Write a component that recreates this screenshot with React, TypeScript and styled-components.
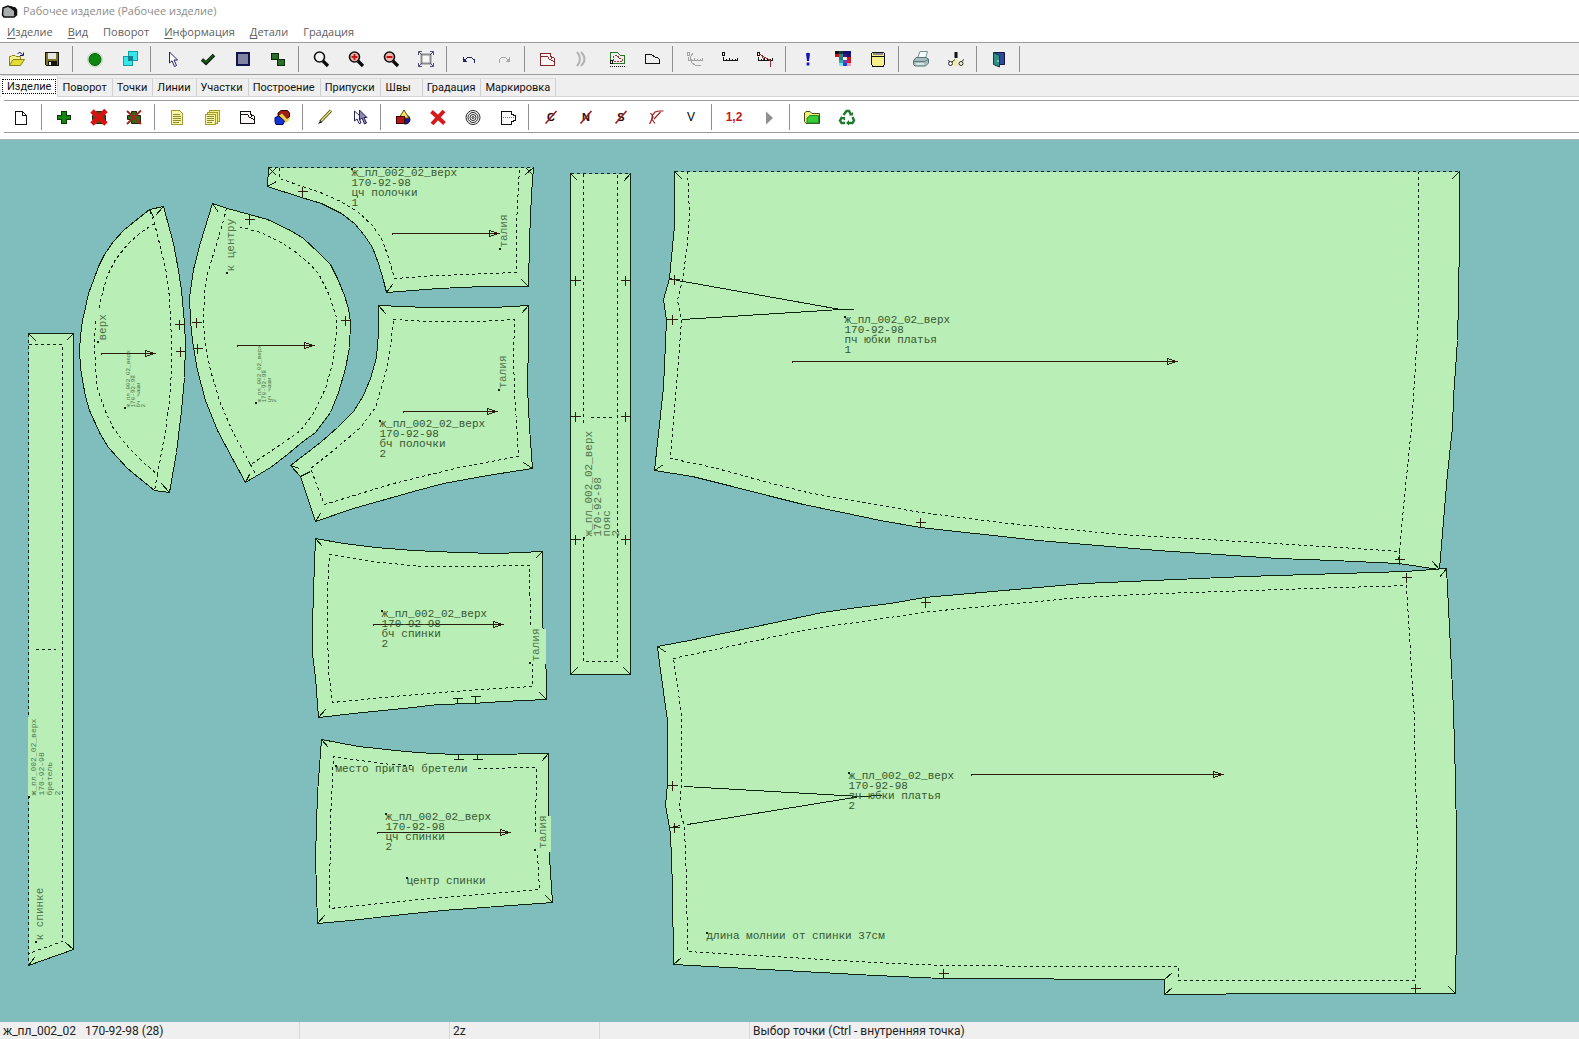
import React from 'react';
import styled, { createGlobalStyle, css } from 'styled-components';

const GlobalStyle = createGlobalStyle`
  * { box-sizing: border-box; }
  html, body, #root { height: 100%; }
  body { margin: 0; background: #fff; overflow: hidden; }
  button { font: inherit; color: inherit; background: none; border: 0; padding: 0; margin: 0; }
`;

const UI_FONT = 'Roboto, "Open Sans", sans-serif';
const MENU_FONT = '"Open Sans", "Noto Sans", sans-serif';
const GLYPH_FONT = '"Liberation Sans", Roboto, sans-serif';
const PLOT_FONT = '"Liberation Mono", "DejaVu Sans Mono", monospace';

const Window = styled.div`
  display: flex;
  flex-direction: column;
  height: 100vh;
  font-family: ${UI_FONT};
  font-size: 12px;
`;

const TitleBar = styled.header`
  display: flex;
  align-items: center;
  gap: 4px;
  height: 22px;
  padding-left: 1px;
  color: #8c8c8c;
`;

const Title = styled.h1`
  margin: 0;
  font-family: ${MENU_FONT};
  font-size: 11px;
  font-weight: 400;
  line-height: 20px;
`;

const MenuBar = styled.nav`
  display: flex;
  align-items: center;
  gap: 15px;
  height: 20px;
  padding-left: 7px;
  font-family: ${MENU_FONT};
  font-size: 11px;
  color: #606060;
`;

const MenuItem = styled.button`
  line-height: 20px;
  text-underline-offset: 2px;
`;

const Toolbar = styled.div<{ $page?: boolean }>`
  display: flex;
  align-items: center;
  height: 33px;
  flex: none;
  border-top: 1px solid #9a9a9a;
  border-bottom: 1px solid #9a9a9a;
  background: #efefef;
  ${(p) =>
    p.$page &&
    css`
      margin: 3px 0 6px 4px;
      background: #fff;
    `}
`;

const ToolButton = styled.button`
  display: flex;
  align-items: center;
  justify-content: center;
  width: 35px;
  height: 30px;
  padding-right: 1px;
  flex: none;
`;

const Separator = styled.span`
  width: 8px;
  height: 26px;
  flex: none;
  &::before {
    content: '';
    display: block;
    width: 1px;
    height: 100%;
    margin-left: 2px;
    background: #8f8f8f;
  }
`;

const Glyph = styled.span<{ $color?: string; $bold?: boolean }>`
  font-family: ${GLYPH_FONT};
  font-size: 12px;
  line-height: 16px;
  font-weight: ${(p) => (p.$bold ? 700 : 400)};
  color: ${(p) => p.$color ?? '#000'};
`;

const TabStrip = styled.div`
  display: flex;
  align-items: flex-end;
  height: 22px;
  flex: none;
  padding-left: 1px;
  background: #efefef;
  border-bottom: 1px solid #d5d5d5;
`;

const Tab = styled.button<{ $active?: boolean; $wide?: boolean }>`
  height: 18px;
  padding: ${(p) => (p.$wide ? '0 11px 0 5px' : '0 5px 0 4px')};
  border-top: 1px solid #dcdcdc;
  border-right: 1px solid #d0d0d0;
  font-size: 11px;
  line-height: 18px;
  color: #111;
  ${(p) =>
    p.$active &&
    css`
      height: 22px;
      margin-bottom: -1px;
      padding: 2px 1px 3px;
      border-right: 1px solid #dcdcdc;
      background: #fff;
    `}
`;

const FocusRect = styled.span`
  display: block;
  padding: 0 4px;
  height: 15px;
  line-height: 13px;
  border: 1px dotted #000;
`;

const Workspace = styled.main`
  flex: 1;
  min-height: 0;
  overflow: hidden;
  background: #80bdbd;
  border-top: 1px solid #a6b4b2;
`;

const Plot = styled.svg`
  display: block;
  width: 100%;
  height: 100%;
  shape-rendering: crispEdges;
  font-family: ${PLOT_FONT};
`;

const StatusBar = styled.footer`
  display: flex;
  height: 17px;
  flex: none;
  background: #efefef;
  color: #222;
  line-height: 18px;
  white-space: pre;
`;

const StatusCell = styled.span<{ $grow?: boolean; $double?: boolean }>`
  flex: ${(p) => (p.$grow ? '1 1 0' : p.$double ? '0 0 300px' : '0 0 150px')};
  padding-left: 3px;
  overflow: hidden;
  border-right: ${(p) => (p.$grow ? '0' : '1px solid #d7d7d7')};
`;

/* ---------- toolbar icons, 18 x 18 grid ---------- */

const IconSvg = styled.svg`
  display: block;
  width: 18px;
  height: 18px;
  fill: none;
  overflow: visible;
`;

const Icon = ({ children, soft }: { children: React.ReactNode; soft?: boolean }) => (
  <IconSvg viewBox="0 0 18 18" shapeRendering={soft ? 'auto' : 'crispEdges'} aria-hidden="true">
    {children}
  </IconSvg>
);

const folder = (
  <Icon soft>
    <path d="M1.500 15.500V6.500H3L4 5.500H7L8 6.500H12.500V9" fill="#f4f08a" stroke="#8a8420" />
    <path d="M1.500 15.500L5 9.500H16.500L12.500 15.500Z" fill="#e4dc30" stroke="#8a8420" />
    <path d="M9.500 4Q12 .500 14.500 5M15.500 2.500V5.500H12" stroke="#1c1c6c" />
  </Icon>
);
const save = (
  <Icon>
    <path d="M2.500 2.500H15.500V15.500H3.500L2.500 14.500Z" fill="#77742c" stroke="#111" />
    <rect x="5" y="3" width="8" height="6" fill="#e6e6e2" />
    <rect x="5" y="11" width="9" height="4" fill="#15150c" />
    <rect x="6" y="12" width="2" height="3" fill="#e6e6e2" />
  </Icon>
);
const greenDot = (
  <Icon soft>
    <circle cx="9" cy="9.500" r="7.500" stroke="#b6dcb6" />
    <circle cx="9" cy="9.500" r="6" fill="#0d860d" stroke="#065606" />
  </Icon>
);
const cyanSquares = (
  <Icon>
    <rect x="7.500" y="1.500" width="9" height="9" fill="#35e6ea" stroke="#12a0a6" />
    <rect x="2.500" y="6.500" width="9" height="9" fill="#35e6ea" stroke="#12a0a6" />
    <rect x="7" y="6" width="5" height="5" fill="#167f90" />
  </Icon>
);
const pointer = (
  <Icon soft>
    <path d="M5.500 2V13L8 10.800L10.500 16.500L12.500 15.500L10 10H13.500Z" fill="#fff" stroke="#22225e" />
  </Icon>
);
const tick = (
  <Icon soft>
    <path d="M3 9.500L7 13L15 5" stroke="#111" strokeWidth="3.500" />
    <path d="M3.500 9.800L7 12.500L14.500 5.300" stroke="#145c14" strokeWidth="1.800" />
  </Icon>
);
const greySquare = (
  <Icon>
    <rect x="3" y="3" width="12" height="12" fill="#83839f" stroke="#12124e" strokeWidth="2" />
  </Icon>
);
const twoBlocks = (
  <Icon>
    <rect x="2.500" y="3.500" width="7" height="6" fill="#2b6e2b" stroke="#082c08" />
    <rect x="8.500" y="9.500" width="7" height="6" fill="#2b6e2b" stroke="#082c08" />
  </Icon>
);
const lens = (sign?: 'plus' | 'minus') => (
  <Icon soft>
    <path d="M11 11L16 16" stroke="#0a0a0a" strokeWidth="3.200" />
    <circle cx="7.500" cy="7" r="5" fill={sign ? '#f5b9b4' : '#f4f4f4'} stroke="#111" strokeWidth="1.600" />
    {sign && <path d={sign === 'plus' ? 'M4.500 7H10.500M7.500 4V10' : 'M4.500 7H10.500'} stroke="#c41616" strokeWidth="2" />}
  </Icon>
);
const fit = (
  <Icon soft>
    <rect x="4.500" y="4.500" width="9" height="9" fill="#f7f7f7" stroke="#8d8d8d" strokeWidth="2" />
    <path d="M1.500 5V1.500H5M2 2L5 5M13 1.500H16.500V5M16 2L13 5M16.500 13V16.500H13M16 16L13 13M5 16.500H1.500V13M2 16L5 13" stroke="#4a4a72" />
  </Icon>
);
const undo = (color: string, flip?: boolean) => (
  <Icon>
    <g transform={flip ? 'matrix(-1 0 0 1 18 0)' : undefined}>
      <path d="M5 9.500L8 7.500H11L14 9.500V12.500M3.500 7V11.500H7" stroke={color} />
      <path d="M4 9.500L5.500 11" stroke={color} />
    </g>
  </Icon>
);
const sheet = (color: string) => (
  <Icon>
    <path d="M2.500 3.500H11.500L13.500 6.500L16.500 8.500V15.500H2.500Z" stroke={color} fill="#fbf7f7" />
    <path d="M2.500 6.500H9.500L11.500 9.500L16 11.500M12 3.500L13.500 9" stroke={color} />
  </Icon>
);
const arcs = (
  <Icon soft>
    <path d="M4 2Q10 9 4 16M8 2Q15 9 8 16" stroke="#b3b3b3" strokeWidth="2" />
  </Icon>
);
const greenPattern = (
  <Icon>
    <path d="M2.500 13.500V2.500H9.500L12.500 5.500H16.500V13.500Z" stroke="#277427" />
    <path d="M5.500 10.500V5.500H9L12 8.500H14V11.500H5" stroke="#a23636" strokeDasharray="2 1" />
    <path d="M2 16.500H17" stroke="#111" strokeDasharray="1 1" />
    <rect x="2.500" y="10.500" width="2" height="3" stroke="#111" />
  </Icon>
);
const flatPattern = (
  <Icon>
    <path d="M2.500 4.500H8.500L12.500 7.500H14.500L16.500 9.500V13.500H2.500Z" stroke="#111" />
  </Icon>
);
const ruler = (kind: 'grey' | 'plain' | 'red') => {
  const color = kind === 'grey' ? '#a2a2a2' : '#111';
  return (
    <Icon>
      <path d="M2.500 7V10.500H16.500V8M5.500 9V10M8.500 8V10M11.500 9V10M14.500 9V10" stroke={color} />
      <rect x="1.500" y="2.500" width="2" height="3" stroke={color} />
      {kind === 'grey' && <path d="M7 3L4 8L6 13L10 15.500H15" stroke={color} />}
      {kind === 'red' && <path d="M3 4L14.500 10.500V16.500M6 6.500L8 10" stroke="#9b2c2c" />}
    </Icon>
  );
};
const exclaim = (
  <Icon soft>
    <path d="M7 3.500Q9 2 11 3.500L10 11H8Z" fill="#1414b4" />
    <rect x="7.600" y="12.500" width="2.800" height="3" fill="#1414b4" />
  </Icon>
);
const mosaicColors = [
  ['#111', '#123c3c', '#14126e', '#111177'],
  ['#c01616', '#2a8686', '#3a1478', '#1a1a66'],
  ['#efefef', '#227e7a', '#efefef', '#c01a2a'],
  ['#efefef', '#28aab0', '#7a3cb4', '#d41e2e'],
  ['#efefef', '#7ce8ea', '#2740da', '#e9a0b8'],
];
const mosaic = (
  <Icon>
    {mosaicColors.map((row, y) =>
      row.map((c, x) => <rect key={`${x}-${y}`} x={1 + x * 4} y={1 + y * 3} width="4" height="3" fill={c} />),
    )}
  </Icon>
);
const database = (
  <Icon>
    <path d="M3.500 2.500H14.500L15.500 4V14L14.500 16.500H3.500L2.500 14V4Z" fill="#f5f08c" stroke="#111" />
    <rect x="4" y="2" width="10" height="3" fill="#8c8c8c" />
    <path d="M2.500 6.500H15.500M3.500 2.500H14.500" stroke="#111" />
  </Icon>
);
const printer = (
  <Icon soft>
    <path d="M5.500 8L8 1.500H15.500L13.500 8" fill="#f8fbfb" stroke="#6f9193" />
    <path d="M1.500 11L4 7.500H14L16.500 9V13L13.500 16H3L1.500 14.500Z" fill="#a8bcbe" stroke="#55777b" />
    <path d="M2 11.500H13L16 9.500" stroke="#587c80" />
    <path d="M4 14H12" stroke="#e9f4f4" strokeWidth="1.500" />
  </Icon>
);
const cutter = (
  <Icon soft>
    <path d="M9 9V16" stroke="#f1eb9a" strokeWidth="3" />
    <rect x="7.500" y="2" width="3" height="6" fill="#111" />
    <circle cx="3.500" cy="13.500" r="2" stroke="#33331a" />
    <circle cx="14" cy="13.500" r="2" stroke="#33331a" />
    <path d="M5 12L8 9.500M14.500 11.500L17 9.500M1 10.500L3 11.500" stroke="#33331a" />
  </Icon>
);
const door = (
  <Icon soft>
    <path d="M3.500 2.500H14.500V14.500H10" fill="#2d4a94" stroke="#15154a" />
    <path d="M3.500 2.500L9.500 5.500V17L3.500 14.500Z" fill="#2f8e86" stroke="#123850" />
    <path d="M8 10V12" stroke="#d8f0e0" />
  </Icon>
);

const page = (
  <Icon>
    <path d="M3.500 3.500H10.500L14.500 7.500V16.500H3.500ZM10.500 3.500V7.500H14.500" fill="#fff" stroke="#111" />
  </Icon>
);
const plus = (
  <Icon>
    <path d="M6.500 3.500H11.500V7.500H15.500V11.500H11.500V15.500H6.500V11.500H2.500V7.500H6.500Z" fill="#148414" stroke="#063c06" />
  </Icon>
);
const plusCrossed = (fill: string, bold?: boolean) => (
  <Icon soft>
    <path d="M6.500 3.500H11.500V7.500H15.500V15.500H6.500V11.500H2.500V7.500H6.500Z" fill={fill} stroke="#2a2208" />
    <path d="M2 3L16 16M16 2.500L2 16" stroke={bold ? '#d41414' : '#a02a1c'} strokeWidth={bold ? 5 : 2} />
  </Icon>
);
const note = (double?: boolean) => (
  <Icon>
    {double && <path d="M6.500 4.500V2.500H16.500V13.500H14" fill="#f4f086" stroke="#a39d2e" />}
    {double && <path d="M4.500 6.500V4.500H14.500V15H12" fill="#f4f086" stroke="#a39d2e" />}
    <path d={double ? 'M2.500 6.500H12.500V16.500H2.500Z' : 'M3.500 2.500H11.500L14.500 5.500V16.500H3.500Z'} fill="#f8f5a8" stroke="#a39d2e" />
    <path d={double ? 'M4 8.500H11M4 10.500H11M4 12.500H11M4 14.500H9' : 'M5 6.500H12M5 8.500H13M5 10.500H13M5 12.500H13M5 14.500H11'} stroke="#8e8a34" />
  </Icon>
);
const cubes = (
  <Icon soft>
    <path d="M5 5L8 2.500H14.500L16.500 5V9L13 11L9 6L5 8Z" fill="#9f1f14" stroke="#300" />
    <path d="M5.500 8L9 5.500L14 11L16.500 9.500V12L12.500 15L8 9.500L5 11Z" fill="#f3d24a" />
    <path d="M2 9.500L6 8L11.500 13L10 16.500H3L2 14Z" fill="#1432d2" stroke="#0a0a4e" />
  </Icon>
);
const pencil = (
  <Icon soft>
    <path d="M15 2.500L4.500 13.500" stroke="#4c4a14" strokeWidth="3.200" />
    <path d="M15 2.500L4.500 13.500" stroke="#e9e37c" strokeWidth="1.400" />
    <path d="M4.500 12L2 16L6 14.500Z" fill="#222" />
  </Icon>
);
const pointers = (
  <Icon soft>
    <path d="M3.500 3V13L6 11L8 15.500L10 15L8 10H11Z" fill="#fff" stroke="#22225e" />
    <path d="M8.500 2V12L11 10L13.500 16L15.500 15L13 9.500H16Z" fill="#8a8ab0" stroke="#22225e" />
  </Icon>
);
const shapes = (
  <Icon soft>
    <circle cx="11.500" cy="11.500" r="4.500" fill="#1a1a8e" stroke="#0a0a3e" />
    <path d="M10 2L15 10H5Z" fill="#f4e36a" stroke="#5e4a08" />
    <rect x="2.500" y="8.500" width="8" height="7" fill="#b41616" stroke="#3c0404" />
  </Icon>
);
const redX = (
  <Icon soft>
    <path d="M2.500 3.500L15.500 15.500M15 3L3 16" stroke="#d41a1a" strokeWidth="4" />
  </Icon>
);
const rings = (
  <Icon soft>
    {[7, 5, 3, 1].map((r) => (
      <circle key={r} cx="9" cy="9.500" r={r} stroke="#222" />
    ))}
  </Icon>
);
const halfPattern = (
  <Icon>
    <path d="M2.500 3.500H12.500V6L16.500 8V12L12.500 14V16H2.500Z" stroke="#111" />
    <path d="M4 9.500H15" stroke="#777" strokeDasharray="1 1" />
  </Icon>
);
const Letter = styled.text`
  font-family: ${GLYPH_FONT};
  font-size: 11px;
  font-weight: 700;
  text-anchor: middle;
  fill: #2a0a0a;
`;
const struck = (letter: string) => (
  <Icon soft>
    <Letter x="9" y="13">{letter}</Letter>
    <path d="M3.500 15.500L14.500 3" stroke="#9b2020" strokeWidth="1.600" />
  </Icon>
);
const redCurve = (
  <Icon soft>
    <path d="M2.500 16L4.500 12L5.500 7L8 4L12 3H16.500M3.500 5L6 8.500L5 11.500L8 15.500M7 11L13.500 4" stroke="#9b2020" strokeWidth="1.200" />
  </Icon>
);
const play = (
  <Icon soft>
    <path d="M6 3.500L13 10L6 16.500Z" fill="#8f8f8f" />
  </Icon>
);
const greenFolder = (
  <Icon soft>
    <path d="M1.500 13.500V5L3 3.500H7L9 5.500H16.500V15.500H3Z" fill="#f1ee7c" stroke="#4a4a12" />
    <path d="M4 15V10L7 7.500H15.500V15Z" fill="#38cc38" stroke="#1d8a1d" />
  </Icon>
);
const recycle = (
  <Icon soft>
    <path d="M5.500 7L8.500 3H11L13 6.500M14.500 9L16 12.500L14.500 15H10M7 15H3.500L2 12.500L4.500 9" stroke="#1d7a2c" strokeWidth="2.400" />
    <path d="M10.500 7.500H15V4ZM11 12V17.500L8 15ZM1.500 9H7V12.500Z" fill="#1d7a2c" />
  </Icon>
);

type Tool = [label: string, icon: React.ReactNode];

const MAIN_TOOLS: Tool[][] = [
  [['Открыть', folder], ['Сохранить', save]],
  [['Готово', greenDot], ['Копировать', cyanSquares]],
  [['Выбор', pointer], ['Применить', tick], ['Деталь', greySquare], ['Детали', twoBlocks]],
  [['Лупа', lens()], ['Увеличить', lens('plus')], ['Уменьшить', lens('minus')], ['Показать всё', fit]],
  [['Отменить', undo('#22225e')], ['Вернуть', undo('#a8a8a8', true)]],
  [['Припуск', sheet('#862828')], ['Дуги', arcs], ['Контур', greenPattern], ['Лекало', flatPattern]],
  [['Измерить кривую', ruler('grey')], ['Измерить', ruler('plain')], ['Измерить угол', ruler('red')]],
  [['Проверка', exclaim], ['Цвета', mosaic], ['База', database]],
  [['Печать', printer], ['Раскрой', cutter]],
  [['Выход', door]],
];

const PAGE_TOOLS: Tool[][] = [
  [['Новый', page]],
  [['Добавить', plus], ['Удалить', plusCrossed('#3a5a14', true)], ['Исключить', plusCrossed('#2f6a1c')]],
  [['Описание', note()], ['Описания', note(true)], ['Лекало', sheet('#111')], ['Слои', cubes]],
  [['Карандаш', pencil], ['Выбор группы', pointers]],
  [['Фигуры', shapes], ['Стереть', redX], ['Кольца', rings], ['Симметрия', halfPattern]],
  [
    ['Без C', struck('C')],
    ['Без N', struck('N')],
    ['Без S', struck('S')],
    ['Без кривой', redCurve],
    ['V', <Glyph>V</Glyph>],
  ],
  [['Нумерация', <Glyph $color="#c01c1c" $bold>1,2</Glyph>], ['Далее', play]],
  [['Папка', greenFolder], ['Обновить', recycle]],
];

const ToolGroups = ({ groups, closed }: { groups: Tool[][]; closed?: boolean }) => (
  <>
    {groups.map((group, i) => (
      <React.Fragment key={i}>
        {group.map(([label, icon]) => (
          <ToolButton key={label} type="button" aria-label={label}>
            {icon}
          </ToolButton>
        ))}
        {(closed || i < groups.length - 1) && <Separator />}
      </React.Fragment>
    ))}
  </>
);

/* ---------- pattern pieces ---------- */

const INK = '#0c2410';
const FABRIC = '#b9eeb7';

type Label = { x: number; y: number; lines: string[]; up?: boolean; size?: number; pitch?: number; dot?: [number, number] };

type Piece = {
  shape: string;
  /* edge drawn solid when part of the contour is a dashed fold line */
  openEdge?: string;
  lines?: string[];
  dashed: string[];
  marks?: string;
  crosses?: [number, number][];
  arrow?: [number, number, number];
  covers?: [number, number, number, number][];
  labels: Label[];
};

const NAME = 'ж_пл_002_02_верх';
const SIZE = '170-92-98';

const PIECES: Piece[] = [
  {
    shape: '28,193 73,193 73,809 28,825',
    openEdge: '28,193 73,193 73,809 28,825',
    dashed: ['28,193 28,825', '28,204 62,204 62,801 28,813', '35,509 55,509'],
    marks: 'M28 193l8 8M73 193l-7 7M28 825l6-8M73 809l-8-7',
    covers: [[27, 576, 8, 80]],
    labels: [
      { x: 35, y: 655, lines: [NAME, SIZE, 'бретель', '2'], up: true, size: 8, pitch: 8, dot: [28, 656] },
      { x: 42, y: 800, lines: ['к спинке'], up: true, dot: [35, 801] },
    ],
  },
  {
    shape:
      '163,66 149,69 134,81 123,90 113,101 104,114 98,126 93,140 88,153 85,167 82,180 80,195 79,210 80,227 82,240 85,256 89,270 94,281 100,294 108,307 117,317 127,328 138,337 154,350 169,352 176,312 181,270 184,237 185,203 184,183 181,150 178,130 173,103 163,66',
    dashed: [
      '154,83 140,92 127,104 115,119 107,135 102,152 98,170',
      '95,181 94,203 95,230 97,248 105,271 113,288 128,307 143,322 157,334 165,290 169,260 171,230 171,200 169,157 166,133 160,107 154,83 149,69',
      '157,334 154,350',
    ],
    marks: 'M149 69l5 9M163 66l-8 9M169 352l-8-9',
    crosses: [[179, 184], [180, 211]],
    arrow: [101, 155, 213],
    labels: [
      { x: 105, y: 200, lines: ['верх'], up: true, dot: [97, 201] },
      { x: 129, y: 267, lines: [NAME, SIZE, 'бч чаши', '2'], up: true, size: 6, pitch: 5, dot: [124, 267] },
    ],
  },
  {
    shape:
      '212,63 227,68 249,74 267,79 290,90 303,98 318,112 330,124 337,138 344,155 348,168 350,182 349,207 345,228 338,252 330,272 315,292 300,303 287,314 270,327 245,342 233,320 217,290 205,260 197,230 192,200 190,180 189,157 193,129 200,102 212,63',
    dashed: [
      '226,68 223,80 215,107 207,133 204,153 203,182 205,205 210,230 220,263 233,293 250,324 267,313 283,302 300,290 313,273 325,248 332,223 336,193 336,177 328,153 318,133 310,124 293,110 277,100 260,92 238,86',
      '250,324 256,335',
    ],
    marks: 'M212 63l6 9M245 342l4-8',
    crosses: [[249, 79], [196, 182], [197, 208], [345, 180]],
    arrow: [237, 314, 205],
    labels: [
      { x: 233, y: 131, lines: ['к центру'], up: true, dot: [226, 132] },
      { x: 260, y: 262, lines: [NAME, SIZE, 'цч чаши', '2'], up: true, size: 6, pitch: 5, dot: [255, 262] },
    ],
  },
  {
    shape:
      '268,27 533,27 531,53 529,100 528,146 483,146 438,148 386,152 383,140 378,123 372,107 364,95 354,83 341,73 321,63 301,57 267,46',
    openEdge:
      '533,27 531,53 529,100 528,146 483,146 438,148 386,152 383,140 378,123 372,107 364,95 354,83 341,73 321,63 301,57 267,46 268,27',
    dashed: [
      '268,27 533,27',
      '279,27 279,38 302,46 320,52 340,61 357,71 372,85 382,100 388,117 394,138 437,135 516,132 516,83 519,27',
    ],
    marks: 'M268 27l8 8M275 28l-7 7M533 27l-8 7M526 28l7 7M386 152l6-8M528 146l-7-7M267 46l9-5',
    crosses: [[302, 51]],
    arrow: [392, 499, 93],
    labels: [
      { x: 351, y: 35, lines: [NAME, SIZE, 'цч полочки', '1'], dot: [351, 28] },
      { x: 506, y: 107, lines: ['талия'], up: true, dot: [499, 108] },
    ],
  },
  {
    shape:
      '378,165 426,167 460,167 493,167 528,165 528,200 527,247 529,287 532,328 487,335 443,343 413,351 353,368 315,381 300,336 290,325 320,302 337,287 353,271 363,255 370,238 376,217 378,193 378,165',
    dashed: [
      '393,179 427,181 477,181 514,179 513,217 514,250 518,316 463,326 393,343 324,364 310,328 333,310 360,287 375,267 385,233 390,207 393,179',
    ],
    marks: 'M378 165l8 9M528 165l-7 8M532 328l-9-6M315 381l5-8M290 325l9 3M300 336l10-5',
    arrow: [403, 497, 271],
    labels: [
      { x: 379, y: 286, lines: [NAME, SIZE, 'бч полочки', '2'], dot: [379, 280] },
      { x: 505, y: 248, lines: ['талия'], up: true, dot: [498, 249] },
    ],
  },
  {
    shape: '570,33 630,33 630,534 570,534',
    openEdge: '570,33 570,534 630,534 630,33',
    dashed: ['570,33 630,33', '583,33 583,285', '583,397 583,521 617,521 617,33', '590,277 611,277'],
    marks: 'M570 33l7 7M630 33l-7 8M570 534l7-7M630 534l-7-7',
    crosses: [[575, 140], [625, 140], [575, 276], [625, 276], [575, 399], [625, 399]],
    labels: [{ x: 591, y: 396, lines: [NAME, SIZE, 'пояс', '2'], up: true, pitch: 9, dot: [583, 397] }],
  },
  {
    shape:
      '315,398 343,403 375,407 413,410 457,412 497,413 542,411 542,485 545,497 546,559 502,561 472,563 438,564 403,568 353,573 318,577 315,537 312,513 312,487 313,450 315,398',
    dashed: [
      '530,485 529,425 467,426 423,426 380,422 329,414 327,447 327,487 328,530 332,562 393,556 440,552 480,549 532,546 532,523',
    ],
    marks: 'M315 398l7 8M542 411l-7 7M546 559l-7-7M318 577l7-8M452 558h10M457 558v5M470 556h10M475 556v6',
    arrow: [373, 503, 484],
    covers: [[536, 488, 9, 35]],
    labels: [
      { x: 381, y: 476, lines: [NAME, SIZE, 'бч спинки', '2'], dot: [381, 470] },
      { x: 538, y: 521, lines: ['талия'], up: true, dot: [529, 522] },
    ],
  },
  {
    shape:
      '321,599 358,606 405,611 432,613 457,614 487,614 548,613 548,675 549,717 552,762 497,766 442,770 403,774 350,780 317,783 315,717 317,653 321,599',
    dashed: [
      '412,625 390,624 360,620 333,616 330,680 329,768 420,759 477,754 539,749 537,713',
      '478,628 536,627 535,695',
    ],
    marks: 'M321 599l7 8M548 613l-7 8M552 762l-7-7M317 783l7-8M458 614v5M453 619h10M477 614v5M472 619h10',
    arrow: [377, 510, 692],
    covers: [[541, 675, 9, 36]],
    labels: [
      { x: 335, y: 631, lines: ['место притач бретели'], dot: [335, 625] },
      { x: 385, y: 679, lines: [NAME, SIZE, 'цч спинки', '2'], dot: [385, 673] },
      { x: 406, y: 743, lines: ['центр спинки'], dot: [406, 737] },
      { x: 545, y: 708, lines: ['талия'], up: true, dot: [534, 709] },
    ],
  },
  {
    shape:
      '674,31 1459,31 1459,95 1458,160 1457,200 1453,257 1452,287 1447,333 1439,429 1398,423 1333,420 1278,418 1157,410 1038,400 920,387 880,380 842,372 803,364 767,355 728,345 692,336 654,330 663,247 666,180 663,159 669,138 674,85',
    openEdge:
      '1459,31 1459,95 1458,160 1457,200 1453,257 1452,287 1447,333 1439,429 1398,423 1333,420 1278,418 1157,410 1038,400 920,387 880,380 842,372 803,364 767,355 728,345 692,336 654,330 663,247 666,180 663,159 669,138 674,85 674,31',
    lines: ['683,141 840,169 853,169', '682,179 840,169'],
    dashed: [
      '674,31 1459,31',
      '687,31 689,73 687,103 682,140 677,160 681,180 677,233 670,318 713,327 760,340 807,352 920,372 1017,384 1120,394 1157,396 1273,403 1340,407 1399,411 1403,367 1411,287 1417,193 1418,163 1418,31',
      '1399,411 1398,423',
    ],
    marks: 'M674 31l8 8M1459 31l-8 8M654 330l9-6M1439 429l-7-8M669 138l13 3M666 179h10',
    crosses: [[674, 139], [672, 179], [920, 382], [1399, 419]],
    arrow: [792, 1177, 221],
    labels: [{ x: 844, y: 182, lines: [NAME, SIZE, 'пч юбки платья', '1'], dot: [844, 176] }],
  },
  {
    shape:
      '657,506 689,500 722,493 756,486 789,479 822,472 857,467 890,463 924,457 1083,443 1245,436 1405,431 1446,428 1449,487 1453,570 1455,640 1456,697 1456,777 1455,853 1289,853 1164,854 1164,839 942,838 875,835 673,824 672,747 670,693 669,687 665,665 667,643 667,580 660,530 657,506',
    lines: ['684,646 860,656 882,655', '687,684 860,656'],
    dashed: [
      '673,518 807,489 930,471 1080,457 1160,453 1281,449 1406,445 1410,513 1414,580 1415,637 1417,703 1415,737 1415,840 1178,840 1178,826 1061,826 942,825 873,822 687,811 686,740 684,687 679,667 681,643 681,573 675,533 673,518',
    ],
    marks: 'M657 506l9 6M1446 428l-7 9M673 824l8-7M1164 839l8-7M1164 854l8-7M1455 853l-7-7M667 645h8M670 687l10-2',
    crosses: [[672, 645], [674, 687], [925, 462], [1406, 437], [943, 833], [1415, 848]],
    arrow: [971, 1223, 634],
    labels: [
      { x: 848, y: 638, lines: [NAME, SIZE, 'зч юбки платья', '2'], dot: [848, 632] },
      { x: 706, y: 798, lines: ['длина молнии от спинки 37см'], dot: [706, 792] },
    ],
  },
];

const PieceLabel = ({ x, y, lines, up, size = 11, pitch = 10, dot }: Label) => (
  <g fill={up ? '#4e7448' : '#36562e'}>
    <g transform={up ? `translate(${x} ${y}) rotate(-90)` : `translate(${x} ${y})`} fontSize={size}>
      {lines.map((line, i) => (
        <text key={i} x={0} y={i * pitch}>
          {line}
        </text>
      ))}
    </g>
    {dot && <rect x={dot[0] - 1} y={dot[1] - 1} width={2} height={2} fill={INK} />}
  </g>
);

const GrainArrow = ({ from, to, y }: { from: number; to: number; y: number }) => (
  <g stroke="#2c1c10" fill="none">
    <path d={`M${from} ${y}H${to - 1}M${from} ${y - 1}v2`} />
    <path d={`M${to - 10} ${y - 3}v6l9-3z`} />
    <path d={`M${to - 6} ${y - 1}h3M${to - 6} ${y + 1}h3`} />
  </g>
);

const PieceView = ({ piece }: { piece: Piece }) => (
  <g>
    <polygon points={piece.shape} fill={FABRIC} stroke={piece.openEdge ? 'none' : INK} />
    {piece.openEdge && <polyline points={piece.openEdge} fill="none" stroke={INK} />}
    {piece.lines?.map((points) => <polyline key={points} points={points} fill="none" stroke={INK} />)}
    {piece.dashed.map((points) => (
      <polyline key={points} points={points} fill="none" stroke={INK} strokeDasharray="3 3" />
    ))}
    {piece.marks && <path d={piece.marks} fill="none" stroke={INK} />}
    {piece.crosses?.map(([x, y]) => (
      <path key={`${x}-${y}`} d={`M${x - 5} ${y}h10M${x} ${y - 5}v10`} stroke="#2c1c10" />
    ))}
    {piece.covers?.map(([x, y, w, h]) => <rect key={y} x={x} y={y} width={w} height={h} fill={FABRIC} />)}
    {piece.arrow && <GrainArrow from={piece.arrow[0]} to={piece.arrow[1]} y={piece.arrow[2]} />}
    {piece.labels.map((label) => (
      <PieceLabel key={`${label.x}-${label.y}`} {...label} />
    ))}
  </g>
);

/* ---------- window ---------- */

const MENU: [hot: string, rest: string][] = [
  ['И', 'зделие'],
  ['В', 'ид'],
  ['', 'Поворот'],
  ['И', 'нформация'],
  ['Д', 'етали'],
  ['', 'Градация'],
];

const TABS: [name: string, wide?: boolean][] = [
  ['Поворот'],
  ['Точки'],
  ['Линии'],
  ['Участки'],
  ['Построение'],
  ['Припуски'],
  ['Швы', true],
  ['Градация'],
  ['Маркировка'],
];

export default function App() {
  return (
    <Window>
      <GlobalStyle />
      <TitleBar>
        <Icon soft>
          <path d="M2 6L7 4L9 5L14 6L15.500 8V13L13 15H3L1.500 13Z" fill="#a9adad" stroke="#111" strokeWidth="1.500" />
          <path d="M7 4.500L10 4L15 7V13L13 14V9Z" fill="#111" />
        </Icon>
        <Title>Рабочее изделие (Рабочее изделие)</Title>
      </TitleBar>
      <MenuBar>
        {MENU.map(([hot, rest]) => (
          <MenuItem key={rest} type="button">
            {hot && <u>{hot}</u>}
            {rest}
          </MenuItem>
        ))}
      </MenuBar>
      <Toolbar role="toolbar">
        <ToolGroups groups={MAIN_TOOLS} closed />
      </Toolbar>
      <TabStrip role="tablist">
        <Tab type="button" role="tab" aria-selected="true" $active>
          <FocusRect>Изделие</FocusRect>
        </Tab>
        {TABS.map(([name, wide]) => (
          <Tab key={name} type="button" role="tab" aria-selected="false" $wide={wide}>
            {name}
          </Tab>
        ))}
      </TabStrip>
      <Toolbar role="toolbar" $page>
        <ToolGroups groups={PAGE_TOOLS} />
      </Toolbar>
      <Workspace>
        <Plot role="img" aria-label="Лекала изделия">
          <g transform="translate(0.5 0.5)">
            {PIECES.map((piece) => (
              <PieceView key={piece.shape} piece={piece} />
            ))}
          </g>
        </Plot>
      </Workspace>
      <StatusBar>
        <StatusCell $double>ж_пл_002_02   170-92-98 (28)</StatusCell>
        <StatusCell />
        <StatusCell>2z</StatusCell>
        <StatusCell />
        <StatusCell $grow>Выбор точки (Ctrl - внутренняя точка)</StatusCell>
      </StatusBar>
    </Window>
  );
}
